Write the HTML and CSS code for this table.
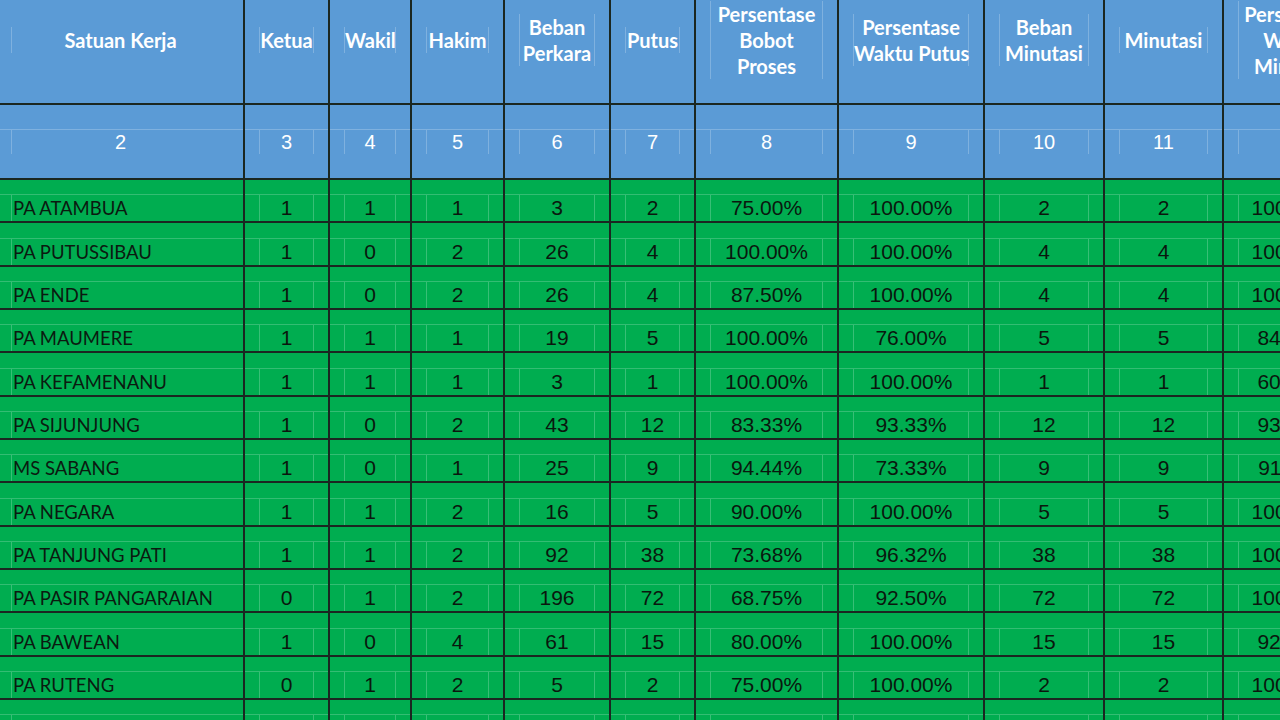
FILE: index.html
```html
<!DOCTYPE html>
<html lang="id">
<head>
<meta charset="utf-8">
<title>Beban Perkara Satuan Kerja</title>
<link rel="stylesheet" href="styles.css">
</head>
<body>
<table class="sheet">
  <colgroup>
    <col class="c-name"><col class="c-ketua"><col class="c-wakil"><col class="c-hakim"><col class="c-beban"><col class="c-putus"><col class="c-pbp"><col class="c-pwp"><col class="c-bm"><col class="c-min"><col class="c-pwm">
  </colgroup>
  <thead>
    <tr class="head">
      <th><div class="box box-name-h">Satuan Kerja</div></th>
      <th><div class="box">Ketua</div></th>
      <th><div class="box">Wakil</div></th>
      <th><div class="box">Hakim</div></th>
      <th><div class="box">Beban<br>Perkara</div></th>
      <th><div class="box">Putus</div></th>
      <th><div class="box">Persentase<br>Bobot<br>Proses</div></th>
      <th><div class="box">Persentase<br>Waktu Putus</div></th>
      <th><div class="box">Beban<br>Minutasi</div></th>
      <th><div class="box">Minutasi</div></th>
      <th><div class="box">Persentase<br>Waktu<br>Minutasi</div></th>
    </tr>
    <tr class="nums">
      <td><div class="box box-name-h">2</div></td>
      <td><div class="box">3</div></td>
      <td><div class="box">4</div></td>
      <td><div class="box">5</div></td>
      <td><div class="box">6</div></td>
      <td><div class="box">7</div></td>
      <td><div class="box">8</div></td>
      <td><div class="box">9</div></td>
      <td><div class="box">10</div></td>
      <td><div class="box">11</div></td>
      <td><div class="box">12</div></td>
    </tr>
  </thead>
  <tbody>
    <tr><td><div class="box name">PA ATAMBUA</div></td><td><div class="box">1</div></td><td><div class="box">1</div></td><td><div class="box">1</div></td><td><div class="box">3</div></td><td><div class="box">2</div></td><td><div class="box">75.00%</div></td><td><div class="box">100.00%</div></td><td><div class="box">2</div></td><td><div class="box">2</div></td><td><div class="box">100.00%</div></td></tr>
    <tr><td><div class="box name">PA PUTUSSIBAU</div></td><td><div class="box">1</div></td><td><div class="box">0</div></td><td><div class="box">2</div></td><td><div class="box">26</div></td><td><div class="box">4</div></td><td><div class="box">100.00%</div></td><td><div class="box">100.00%</div></td><td><div class="box">4</div></td><td><div class="box">4</div></td><td><div class="box">100.00%</div></td></tr>
    <tr><td><div class="box name">PA ENDE</div></td><td><div class="box">1</div></td><td><div class="box">0</div></td><td><div class="box">2</div></td><td><div class="box">26</div></td><td><div class="box">4</div></td><td><div class="box">87.50%</div></td><td><div class="box">100.00%</div></td><td><div class="box">4</div></td><td><div class="box">4</div></td><td><div class="box">100.00%</div></td></tr>
    <tr><td><div class="box name">PA MAUMERE</div></td><td><div class="box">1</div></td><td><div class="box">1</div></td><td><div class="box">1</div></td><td><div class="box">19</div></td><td><div class="box">5</div></td><td><div class="box">100.00%</div></td><td><div class="box">76.00%</div></td><td><div class="box">5</div></td><td><div class="box">5</div></td><td><div class="box">84.00%</div></td></tr>
    <tr><td><div class="box name">PA KEFAMENANU</div></td><td><div class="box">1</div></td><td><div class="box">1</div></td><td><div class="box">1</div></td><td><div class="box">3</div></td><td><div class="box">1</div></td><td><div class="box">100.00%</div></td><td><div class="box">100.00%</div></td><td><div class="box">1</div></td><td><div class="box">1</div></td><td><div class="box">60.00%</div></td></tr>
    <tr><td><div class="box name">PA SIJUNJUNG</div></td><td><div class="box">1</div></td><td><div class="box">0</div></td><td><div class="box">2</div></td><td><div class="box">43</div></td><td><div class="box">12</div></td><td><div class="box">83.33%</div></td><td><div class="box">93.33%</div></td><td><div class="box">12</div></td><td><div class="box">12</div></td><td><div class="box">93.33%</div></td></tr>
    <tr><td><div class="box name">MS SABANG</div></td><td><div class="box">1</div></td><td><div class="box">0</div></td><td><div class="box">1</div></td><td><div class="box">25</div></td><td><div class="box">9</div></td><td><div class="box">94.44%</div></td><td><div class="box">73.33%</div></td><td><div class="box">9</div></td><td><div class="box">9</div></td><td><div class="box">91.11%</div></td></tr>
    <tr><td><div class="box name">PA NEGARA</div></td><td><div class="box">1</div></td><td><div class="box">1</div></td><td><div class="box">2</div></td><td><div class="box">16</div></td><td><div class="box">5</div></td><td><div class="box">90.00%</div></td><td><div class="box">100.00%</div></td><td><div class="box">5</div></td><td><div class="box">5</div></td><td><div class="box">100.00%</div></td></tr>
    <tr><td><div class="box name">PA TANJUNG PATI</div></td><td><div class="box">1</div></td><td><div class="box">1</div></td><td><div class="box">2</div></td><td><div class="box">92</div></td><td><div class="box">38</div></td><td><div class="box">73.68%</div></td><td><div class="box">96.32%</div></td><td><div class="box">38</div></td><td><div class="box">38</div></td><td><div class="box">100.00%</div></td></tr>
    <tr><td><div class="box name">PA PASIR PANGARAIAN</div></td><td><div class="box">0</div></td><td><div class="box">1</div></td><td><div class="box">2</div></td><td><div class="box">196</div></td><td><div class="box">72</div></td><td><div class="box">68.75%</div></td><td><div class="box">92.50%</div></td><td><div class="box">72</div></td><td><div class="box">72</div></td><td><div class="box">100.00%</div></td></tr>
    <tr><td><div class="box name">PA BAWEAN</div></td><td><div class="box">1</div></td><td><div class="box">0</div></td><td><div class="box">4</div></td><td><div class="box">61</div></td><td><div class="box">15</div></td><td><div class="box">80.00%</div></td><td><div class="box">100.00%</div></td><td><div class="box">15</div></td><td><div class="box">15</div></td><td><div class="box">92.00%</div></td></tr>
    <tr><td><div class="box name">PA RUTENG</div></td><td><div class="box">0</div></td><td><div class="box">1</div></td><td><div class="box">2</div></td><td><div class="box">5</div></td><td><div class="box">2</div></td><td><div class="box">75.00%</div></td><td><div class="box">100.00%</div></td><td><div class="box">2</div></td><td><div class="box">2</div></td><td><div class="box">100.00%</div></td></tr>
    <tr><td><div class="box name"></div></td><td><div class="box"></div></td><td><div class="box"></div></td><td><div class="box"></div></td><td><div class="box"></div></td><td><div class="box"></div></td><td><div class="box"></div></td><td><div class="box"></div></td><td><div class="box"></div></td><td><div class="box"></div></td><td><div class="box"></div></td></tr>
  </tbody>
</table>
</body>
</html>
```
FILE: styles.css
```css
html, body {
  margin: 0;
  padding: 0;
  width: 1280px;
  height: 720px;
  overflow: hidden;
  background: #00ad50;
}

.sheet {
  border-collapse: collapse;
  table-layout: fixed;
  width: 1363px;
  margin-left: -1px;
  margin-top: -1px;
}

.c-name { width: 245px; }
.c-ketua { width: 85px; }
.c-wakil { width: 82px; }
.c-hakim { width: 93px; }
.c-beban { width: 106px; }
.c-putus { width: 85px; }
.c-pbp { width: 143px; }
.c-pwp { width: 146px; }
.c-bm { width: 120px; }
.c-min { width: 119px; }
.c-pwm { width: 140px; }

.sheet th,
.sheet td {
  padding: 0;
  border: 2px solid #1b2721;
  overflow: hidden;
  white-space: nowrap;
}

.box {
  margin: 0 14px;
  border-left: 1px solid rgba(255, 255, 255, 0.22);
  border-right: 1px solid rgba(255, 255, 255, 0.22);
  text-align: center;
}

/* Header row */
.head th {
  height: 105px;
  box-sizing: border-box;
  padding-bottom: 22px;
  vertical-align: middle;
  background: #5b9bd6;
  color: #ffffff;
  font-family: Lato, "Open Sans", sans-serif;
  font-weight: 700;
  font-size: 20px;
  border-top: none;
}
.head .box {
  line-height: 26px;
}

/* Column number row */
.nums td {
  height: 75px;
  box-sizing: border-box;
  vertical-align: middle;
  background: linear-gradient(rgba(255, 255, 255, 0.22), rgba(255, 255, 255, 0.22)) no-repeat 0 24px / 100% 1px, #5b9bd6;
  color: #ffffff;
  font-family: "Liberation Sans", Arial, sans-serif;
  font-size: 20px;
}
.nums .box {
  height: 24px;
  line-height: 24px;
}

.box-name-h {
  margin-left: 12px;
  margin-right: 14px;
  border-right: none;
}

/* Data rows */
tbody td {
  height: 43.33px;
  box-sizing: border-box;
  vertical-align: bottom;
  background: linear-gradient(rgba(255, 255, 255, 0.2), rgba(255, 255, 255, 0.2)) no-repeat 0 calc(100% - 26px) / 100% 1px, #00ad50;
  color: #0a170e;
  font-family: "Liberation Sans", Arial, sans-serif;
  font-size: 21px;
}
tbody .box {
  height: 26px;
  line-height: 26px;
}

.sheet tr > :first-child {
  border-left: none;
}

tbody .name {
  margin-left: 12px;
  margin-right: 0;
  border-right: none;
  text-align: left;
  padding-left: 1px;
  font-family: Lato, "Open Sans", sans-serif;
  font-size: 18.5px;
  color: #0b1a10;
}
```
